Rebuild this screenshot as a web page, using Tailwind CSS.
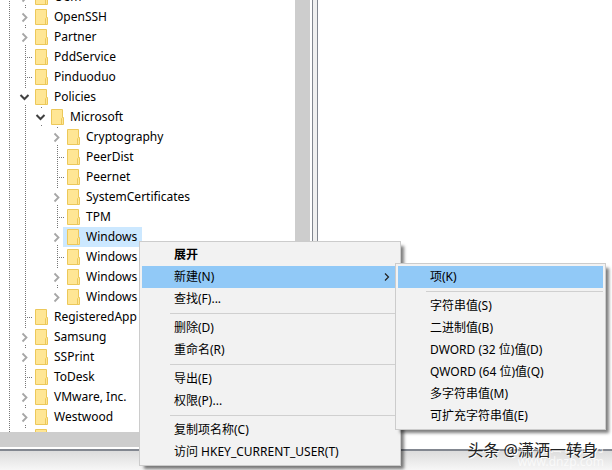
<!DOCTYPE html>
<html lang="zh-CN">

<head>
	<meta charset="UTF-8">
	<meta name="viewport" content="width=device-width, initial-scale=1.0">
	<title>注册表编辑器</title>
	<script src="https://cdn.jsdelivr.net/npm/@tailwindcss/browser@4"></script>
</head>

<body class="relative flex h-screen flex-col overflow-hidden bg-white font-['Noto_Sans','Noto_Sans_CJK_SC',sans-serif] text-xs leading-5 text-black">

	<!-- Icons and guide lines of the tree -->
	<svg class="hidden">
		<symbol id="line" viewBox="0 0 16 20">
			<path d="M8.5 0V20" stroke="#777" stroke-dasharray="1 1" />
		</symbol>
		<symbol id="tee" viewBox="0 0 16 20">
			<path d="M8.5 0V20M10 10.5H16" stroke="#777" stroke-dasharray="1 1" />
		</symbol>
		<symbol id="closed" viewBox="0 0 16 20">
			<path d="M8.5 0V2M8.5 18V20" stroke="#777" stroke-dasharray="1 1" />
			<path d="M5.5 6.5L9.5 10.5L5.5 14.5" fill="none" stroke="#a6a6a6" stroke-width="1.8" />
		</symbol>
		<symbol id="last" viewBox="0 0 16 20">
			<path d="M8.5 0V2" stroke="#777" stroke-dasharray="1 1" />
			<path d="M5.5 6.5L9.5 10.5L5.5 14.5" fill="none" stroke="#a6a6a6" stroke-width="1.8" />
		</symbol>
		<symbol id="open" viewBox="0 0 16 20">
			<path d="M8.5 0V2M8.5 18V20" stroke="#777" stroke-dasharray="1 1" />
			<path d="M3.5 8L7.5 12L11.5 8" fill="none" stroke="#404040" stroke-width="2" />
		</symbol>
		<symbol id="folder" viewBox="0 0 14 20">
			<path d="M.5 2.5H11.5V10.5H12.5V17.5H.5Z" fill="#ffe694" stroke="#ecc85a" />
			<path d="M10.5 17V11.5L11.5 10.5" fill="none" stroke="#ecc85a" />
		</symbol>
	</svg>

	<main class="flex min-h-0 flex-1">
		<section class="flex w-[312px] shrink-0 flex-col">
			<div class="flex min-h-0 flex-1">
				<ul role="tree" class="-mt-[13px] min-w-0 flex-1 overflow-hidden pl-px whitespace-nowrap">
					<li role="treeitem" class="flex h-5"><svg class="h-5 w-4"><use href="#line" /></svg><svg class="h-5 w-4"><use href="#closed" /></svg><svg class="ml-[2px] h-5 w-[14px]"><use href="#folder" /></svg><button class="px-[5px]">Oem</button></li>
					<li role="treeitem" class="flex h-5"><svg class="h-5 w-4"><use href="#line" /></svg><svg class="h-5 w-4"><use href="#closed" /></svg><svg class="ml-[2px] h-5 w-[14px]"><use href="#folder" /></svg><button class="px-[5px]">OpenSSH</button></li>
					<li role="treeitem" class="flex h-5"><svg class="h-5 w-4"><use href="#line" /></svg><svg class="h-5 w-4"><use href="#closed" /></svg><svg class="ml-[2px] h-5 w-[14px]"><use href="#folder" /></svg><button class="px-[5px]">Partner</button></li>
					<li role="treeitem" class="flex h-5"><svg class="h-5 w-4"><use href="#line" /></svg><svg class="h-5 w-4"><use href="#tee" /></svg><svg class="ml-[2px] h-5 w-[14px]"><use href="#folder" /></svg><button class="px-[5px]">PddService</button></li>
					<li role="treeitem" class="flex h-5"><svg class="h-5 w-4"><use href="#line" /></svg><svg class="h-5 w-4"><use href="#tee" /></svg><svg class="ml-[2px] h-5 w-[14px]"><use href="#folder" /></svg><button class="px-[5px]">Pinduoduo</button></li>
					<li role="treeitem" class="flex h-5"><svg class="h-5 w-4"><use href="#line" /></svg><svg class="h-5 w-4"><use href="#open" /></svg><svg class="ml-[2px] h-5 w-[14px]"><use href="#folder" /></svg><button class="px-[5px]">Policies</button></li>
					<li role="treeitem" class="flex h-5"><svg class="h-5 w-4"><use href="#line" /></svg><svg class="h-5 w-4"><use href="#line" /></svg><svg class="h-5 w-4"><use href="#open" /></svg><svg class="ml-[2px] h-5 w-[14px]"><use href="#folder" /></svg><button class="px-[5px]">Microsoft</button></li>
					<li role="treeitem" class="flex h-5"><svg class="h-5 w-4"><use href="#line" /></svg><svg class="mr-4 h-5 w-4"><use href="#line" /></svg><svg class="h-5 w-4"><use href="#closed" /></svg><svg class="ml-[2px] h-5 w-[14px]"><use href="#folder" /></svg><button class="px-[5px]">Cryptography</button></li>
					<li role="treeitem" class="flex h-5"><svg class="h-5 w-4"><use href="#line" /></svg><svg class="mr-4 h-5 w-4"><use href="#line" /></svg><svg class="h-5 w-4"><use href="#tee" /></svg><svg class="ml-[2px] h-5 w-[14px]"><use href="#folder" /></svg><button class="px-[5px]">PeerDist</button></li>
					<li role="treeitem" class="flex h-5"><svg class="h-5 w-4"><use href="#line" /></svg><svg class="mr-4 h-5 w-4"><use href="#line" /></svg><svg class="h-5 w-4"><use href="#tee" /></svg><svg class="ml-[2px] h-5 w-[14px]"><use href="#folder" /></svg><button class="px-[5px]">Peernet</button></li>
					<li role="treeitem" class="flex h-5"><svg class="h-5 w-4"><use href="#line" /></svg><svg class="mr-4 h-5 w-4"><use href="#line" /></svg><svg class="h-5 w-4"><use href="#closed" /></svg><svg class="ml-[2px] h-5 w-[14px]"><use href="#folder" /></svg><button class="px-[5px]">SystemCertificates</button></li>
					<li role="treeitem" class="flex h-5"><svg class="h-5 w-4"><use href="#line" /></svg><svg class="mr-4 h-5 w-4"><use href="#line" /></svg><svg class="h-5 w-4"><use href="#tee" /></svg><svg class="ml-[2px] h-5 w-[14px]"><use href="#folder" /></svg><button class="px-[5px]">TPM</button></li>
					<li role="treeitem" aria-selected="true" class="flex h-5"><svg class="h-5 w-4"><use href="#line" /></svg><svg class="mr-4 h-5 w-4"><use href="#line" /></svg><svg class="h-5 w-[14px]"><use href="#closed" width="16" height="20" /></svg><span class="flex bg-[#cce8ff] pl-1"><svg class="h-5 w-[14px]"><use href="#folder" /></svg><button class="px-[5px]">Windows</button></span></li>
					<li role="treeitem" class="flex h-5"><svg class="h-5 w-4"><use href="#line" /></svg><svg class="mr-4 h-5 w-4"><use href="#line" /></svg><svg class="h-5 w-4"><use href="#tee" /></svg><svg class="ml-[2px] h-5 w-[14px]"><use href="#folder" /></svg><button class="px-[5px]">Windows</button></li>
					<li role="treeitem" class="flex h-5"><svg class="h-5 w-4"><use href="#line" /></svg><svg class="mr-4 h-5 w-4"><use href="#line" /></svg><svg class="h-5 w-4"><use href="#closed" /></svg><svg class="ml-[2px] h-5 w-[14px]"><use href="#folder" /></svg><button class="px-[5px]">Windows</button></li>
					<li role="treeitem" class="flex h-5"><svg class="h-5 w-4"><use href="#line" /></svg><svg class="mr-4 h-5 w-4"><use href="#line" /></svg><svg class="h-5 w-4"><use href="#last" /></svg><svg class="ml-[2px] h-5 w-[14px]"><use href="#folder" /></svg><button class="px-[5px]">Windows</button></li>
					<li role="treeitem" class="flex h-5"><svg class="h-5 w-4"><use href="#line" /></svg><svg class="h-5 w-4"><use href="#tee" /></svg><svg class="ml-[2px] h-5 w-[14px]"><use href="#folder" /></svg><button class="px-[5px]">RegisteredApp</button></li>
					<li role="treeitem" class="flex h-5"><svg class="h-5 w-4"><use href="#line" /></svg><svg class="h-5 w-4"><use href="#closed" /></svg><svg class="ml-[2px] h-5 w-[14px]"><use href="#folder" /></svg><button class="px-[5px]">Samsung</button></li>
					<li role="treeitem" class="flex h-5"><svg class="h-5 w-4"><use href="#line" /></svg><svg class="h-5 w-4"><use href="#closed" /></svg><svg class="ml-[2px] h-5 w-[14px]"><use href="#folder" /></svg><button class="px-[5px]">SSPrint</button></li>
					<li role="treeitem" class="flex h-5"><svg class="h-5 w-4"><use href="#line" /></svg><svg class="h-5 w-4"><use href="#tee" /></svg><svg class="ml-[2px] h-5 w-[14px]"><use href="#folder" /></svg><button class="px-[5px]">ToDesk</button></li>
					<li role="treeitem" class="flex h-5"><svg class="h-5 w-4"><use href="#line" /></svg><svg class="h-5 w-4"><use href="#closed" /></svg><svg class="ml-[2px] h-5 w-[14px]"><use href="#folder" /></svg><button class="px-[5px]">VMware, Inc.</button></li>
					<li role="treeitem" class="flex h-5"><svg class="h-5 w-4"><use href="#line" /></svg><svg class="h-5 w-4"><use href="#closed" /></svg><svg class="ml-[2px] h-5 w-[14px]"><use href="#folder" /></svg><button class="px-[5px]">Westwood</button></li>
					<li role="treeitem" class="flex h-5"><svg class="h-5 w-4"><use href="#line" /></svg><svg class="h-5 w-4"><use href="#closed" /></svg><svg class="ml-[2px] h-5 w-[14px]"><use href="#folder" /></svg></li>
				</ul>
				<div class="mr-[2px] w-[15px] bg-[#cdcdcd]"></div>
			</div>
			<div class="mb-[2px] h-[15px] bg-[#cdcdcd]"></div>
		</section>
		<div class="w-[6px] shrink-0 border-x border-[#828790] bg-[#f0f0f0]"></div>
		<section class="flex-1"></section>
	</main>
	<footer class="h-[21px] shrink-0 border-t-2 border-[#828790] bg-linear-to-b from-[#dcdcdc] to-[#f7f7f7]"></footer>

	<!-- Context menu -->
	<div role="menu" class="absolute top-[241px] left-[139px] flex w-[262px] flex-col border border-[#ccc] bg-[#f2f2f2] p-[2px] leading-[22px] shadow-[4px_4px_3px_-1px_rgba(0,0,0,0.5)]">
		<button role="menuitem" class="pl-8 text-left font-bold">展开</button>
		<button role="menuitem" class="flex items-center justify-between bg-[#91c9f7] pr-[5px] pl-8">新建(N)
			<svg class="h-3 w-3" viewBox="0 0 12 12"><path d="M4 2.5L7.5 6L4 9.5" fill="none" stroke="#222" stroke-width="1.2" /></svg>
		</button>
		<button role="menuitem" class="pl-8 text-left">查找(F)...</button>
		<hr class="my-[3px] ml-7 border-[#d0d0d0]">
		<button role="menuitem" class="pl-8 text-left">删除(D)</button>
		<button role="menuitem" class="pl-8 text-left">重命名(R)</button>
		<hr class="my-[3px] ml-7 border-[#d0d0d0]">
		<button role="menuitem" class="pl-8 text-left">导出(E)</button>
		<button role="menuitem" class="pl-8 text-left">权限(P)...</button>
		<hr class="my-[3px] ml-7 border-[#d0d0d0]">
		<button role="menuitem" class="pl-8 text-left">复制项名称(C)</button>
		<button role="menuitem" class="pl-8 text-left">访问 HKEY_CURRENT_USER(T)</button>
	</div>

	<!-- Watermarks -->
	<div class="absolute right-2 bottom-0 text-right text-white/70">
		<p class="text-sm leading-4">电脑装配网</p>
		<p class="leading-4">www.dnzp.com</p>
	</div>
	<p class="absolute right-[14px] bottom-2 text-base leading-6 text-[#222] text-shadow-[1px_1px_0_#fff]">头条 @潇洒一转身</p>

	<!-- Submenu -->
	<div role="menu" class="absolute top-[263px] left-[395px] flex w-[211px] flex-col border border-[#ccc] bg-[#f2f2f2] p-[2px] leading-[22px] shadow-[4px_4px_3px_-1px_rgba(0,0,0,0.5)]">
		<button role="menuitem" class="bg-[#91c9f7] pl-8 text-left">项(K)</button>
		<hr class="my-[3px] ml-7 border-[#d0d0d0]">
		<button role="menuitem" class="pl-8 text-left">字符串值(S)</button>
		<button role="menuitem" class="pl-8 text-left">二进制值(B)</button>
		<button role="menuitem" class="pl-8 text-left">DWORD (32 位)值(D)</button>
		<button role="menuitem" class="pl-8 text-left">QWORD (64 位)值(Q)</button>
		<button role="menuitem" class="pl-8 text-left">多字符串值(M)</button>
		<button role="menuitem" class="pl-8 text-left">可扩充字符串值(E)</button>
	</div>

</body>

</html>
